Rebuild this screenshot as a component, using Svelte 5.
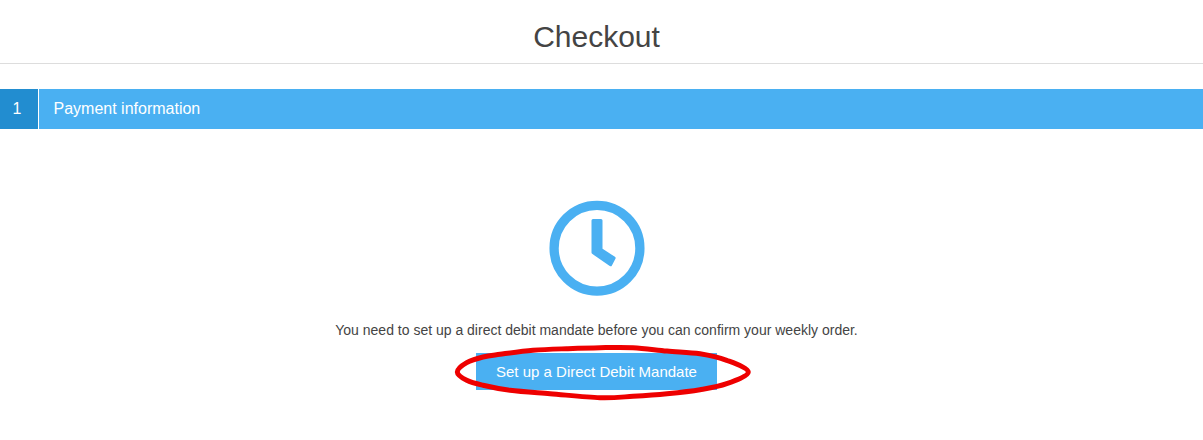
<script>
  const pts = [[3.3,26],[12.7,16.7],[29,11],[46,8.3],[79,4.3],[112.7,2.7],[146,1.7],[179,1.7],[213,5],[246,7.7],[272.7,14.3],[294.3,26],[272.7,37.7],[246,43.7],[213,47.7],[179,50.3],[146,51.7],[96,47.7],[56,44.3],[29,39.3],[12.7,34.3]];
  const n = pts.length;
  let d = `M${pts[0][0]} ${pts[0][1]}`;
  for (let i = 0; i < n; i++) {
    const [p0, p1, p2, p3] = [pts[(i - 1 + n) % n], pts[i], pts[(i + 1) % n], pts[(i + 2) % n]];
    const c1 = [p1[0] + (p2[0] - p0[0]) / 6, p1[1] + (p2[1] - p0[1]) / 6];
    const c2 = [p2[0] - (p3[0] - p1[0]) / 6, p2[1] - (p3[1] - p1[1]) / 6];
    d += `C${c1[0].toFixed(1)} ${c1[1].toFixed(1)} ${c2[0].toFixed(1)} ${c2[1].toFixed(1)} ${p2[0]} ${p2[1]}`;
  }
  d += "Z";
</script>

<div class="page">
  <header class="top"><h1>Checkout</h1></header>
  <section class="step">
    <div class="num">1</div>
    <div class="label">Payment information</div>
  </section>
  <main class="body">
    <svg class="clock" width="96" height="96" viewBox="0 0 96 96" aria-hidden="true">
      <circle cx="48" cy="48.2" r="42.9" fill="none" stroke="#4ab0f2" stroke-width="9.3" />
      <path d="M44 20.5H52V49.5L65.1 58.1L61.6 64.7L44 52.6Z" fill="#4ab0f2" stroke="#4ab0f2" stroke-width="3" stroke-linejoin="round" />
    </svg>
    <p>You need to set up a direct debit mandate before you can confirm your weekly order.</p>
    <div class="cta">
      <button type="button">Set up a Direct Debit Mandate</button>
      <svg class="ring" width="298" height="54" viewBox="0 0 298 54" aria-hidden="true">
        <path {d} fill="none" stroke="#ee0000" stroke-width="5" />
      </svg>
    </div>
  </main>
</div>

<style>
  :global(body) { margin: 0; background: #fff; }
  .page { font-family: "Liberation Sans", Arial, sans-serif; color: #444; height: 440px; overflow: hidden; }
  .top { height: 63px; border-bottom: 1px solid #ddd; display: flex; align-items: center; justify-content: center; padding-right: 10px; }
  h1 { margin: 0; font-size: 30px; font-weight: 400; line-height: 1; color: #444; padding-top: 10px; }
  .step { margin-top: 25px; height: 40px; display: flex; background: #4ab0f2; color: #fff; }
  .num { width: 34px; padding-right: 4px; background: #228dd0; border-right: 1px solid #fff; display: flex; align-items: center; justify-content: center; font-size: 16px; box-sizing: content-box; }
  .label { padding-left: 14.5px; display: flex; align-items: center; font-size: 16px; }
  .body { display: flex; flex-direction: column; align-items: center; padding-top: 71px; padding-right: 10px; }
  .clock { display: block; }
  p { margin: 24px 0 0; font-size: 14px; line-height: 20px; color: #444; }
  .cta { position: relative; margin-top: 13px; }
  button { display: block; width: 241px; height: 37px; border: 0; padding: 0; background: #4ab0f2; color: #fff; font: 400 15px/20px "Liberation Sans", Arial, sans-serif; }
  .ring { position: absolute; left: -22px; top: -7px; overflow: visible; pointer-events: none; }
</style>
